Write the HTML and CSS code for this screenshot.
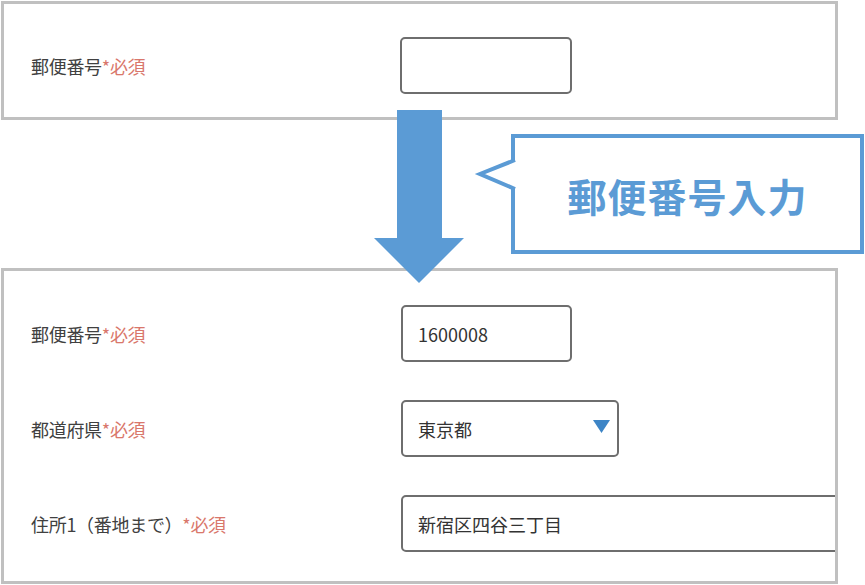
FILE: index.html
```html
<!DOCTYPE html>
<html lang="ja">
<head>
    <meta charset="UTF-8">
    <meta name="viewport" content="width=device-width, initial-scale=1.0">
    <title>郵便番号入力</title>
    <link rel="stylesheet" href="styles.css">
</head>
<body>
    <div class="page">
        <div class="panel panel-before">
            <div class="form-row">
                <label class="field-label">郵便番号<span class="required">*必須</span></label>
                <input class="text-input zip-input" type="text" value="">
            </div>
        </div>

        <div class="between">
            <div class="callout">
                <svg class="callout-tail" width="44" height="44" viewBox="0 0 44 44">
                    <polygon points="44,7 6,21 44,36" fill="#fff"/>
                    <polyline points="41,7 6,21 41,36" fill="none" stroke="#5b9bd5" stroke-width="4"/>
                </svg>
                <span class="callout-text">郵便番号入力</span>
            </div>
        </div>

        <div class="panel panel-after">
            <div class="form-row">
                <label class="field-label">郵便番号<span class="required">*必須</span></label>
                <input class="text-input zip-input" type="text" value="1600008">
            </div>
            <div class="form-row">
                <label class="field-label">都道府県<span class="required">*必須</span></label>
                <div class="select-box">
                    <span>東京都</span>
                    <svg class="select-arrow" width="17" height="13" viewBox="0 0 17 13">
                        <polygon points="0,0 17,0 8.5,13" fill="#3d85c6"/>
                    </svg>
                </div>
            </div>
            <div class="form-row">
                <label class="field-label">住所1（番地まで）<span class="required">*必須</span></label>
                <input class="text-input address-input" type="text" value="新宿区四谷三丁目">
            </div>
        </div>

        <!-- big arrow lying over both panels -->
        <svg class="down-arrow" width="90" height="173" viewBox="0 0 90 173">
            <polygon points="23,0 68,0 68,128 90,128 45,173 0,128 23,128" fill="#5b9bd5"/>
        </svg>
    </div>
</body>
</html>
```

FILE: styles.css
```css
body {
    margin: 0;
    background-color: #fff;
    font-family: "Noto Sans CJK JP", "Noto Sans", sans-serif;
    color: #404040;
}

.page {
    position: relative;
    width: 865px;
    height: 585px;
    padding: 1px 0 0 1px;
    box-sizing: border-box;
}

.panel {
    width: 837px;
    box-sizing: border-box;
    border: 3px solid #c0c0c0;
    background-color: #fff;
    overflow: hidden;
    padding-left: 27px;
    display: flex;
    flex-direction: column;
    gap: 38px;
}

.panel-before {
    height: 119px;
    padding-top: 33px;
}

.panel-after {
    height: 316px;
    padding-top: 34px;
}

.form-row {
    display: grid;
    grid-template-columns: 369px 1fr;
    align-items: center;
    height: 57px;
}

.field-label {
    font-size: 18px;
    letter-spacing: -0.3px;
}

.required {
    color: #d9776b;
}

.text-input,
.select-box {
    height: 57px;
    box-sizing: border-box;
    border: 2px solid #6e6e6e;
    border-radius: 5px;
    padding: 0 15px;
    font-family: inherit;
    font-size: 18px;
    color: #333;
    background-color: #fff;
    outline: none;
}

.zip-input {
    width: 172px;
}

.panel-after .zip-input {
    width: 171px;
    margin-left: 1px;
}

.select-box {
    width: 218px;
    margin-left: 1px;
    display: flex;
    align-items: center;
    justify-content: space-between;
    padding-right: 7px;
}

.select-arrow {
    margin-top: -4px;
}

.address-input {
    width: 520px;
    margin-left: 1px;
}

.between {
    height: 148px;
    padding: 14px 0 0 510px;
    box-sizing: border-box;
}

.callout {
    position: relative;
    width: 353px;
    height: 120px;
    box-sizing: border-box;
    border: 4px solid #5b9bd5;
    background-color: #fff;
    display: flex;
    align-items: center;
    justify-content: center;
}

.callout-tail {
    position: absolute;
    left: -41px;
    top: 15px;
}

.callout-text {
    color: #5b9bd5;
    font-size: 39px;
    font-weight: bold;
    letter-spacing: 1px;
    margin-top: 2px;
}

.down-arrow {
    position: absolute;
    left: 374px;
    top: 110px;
}
```
